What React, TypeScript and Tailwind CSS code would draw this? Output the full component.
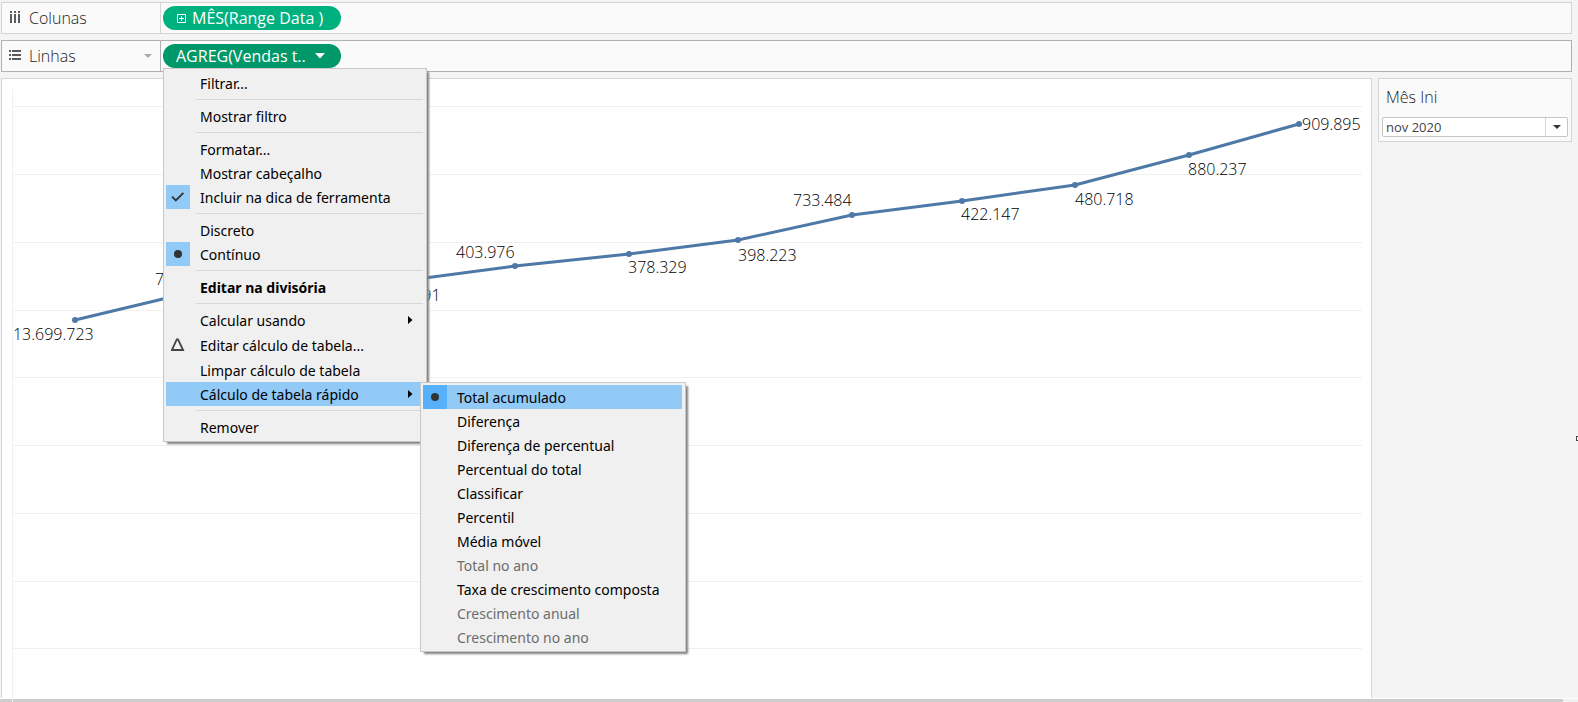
import type { ReactNode } from 'react';

type MenuEntry = {
  label: string;
  mark?: 'check' | 'dot' | 'delta';
  submenu?: boolean;
  active?: boolean;
  bold?: boolean;
  disabled?: boolean;
  tall?: boolean;
};

const menuGroups: MenuEntry[][] = [
  [{ label: 'Filtrar...' }],
  [{ label: 'Mostrar filtro' }],
  [
    { label: 'Formatar...' },
    { label: 'Mostrar cabeçalho' },
    { label: 'Incluir na dica de ferramenta', mark: 'check' },
  ],
  [{ label: 'Discreto' }, { label: 'Contínuo', mark: 'dot' }],
  [{ label: 'Editar na divisória', bold: true }],
  [
    { label: 'Calcular usando', submenu: true },
    { label: 'Editar cálculo de tabela...', mark: 'delta', tall: true },
    { label: 'Limpar cálculo de tabela' },
    { label: 'Cálculo de tabela rápido', submenu: true, active: true },
  ],
  [{ label: 'Remover' }],
];

const quickCalcs: MenuEntry[][] = [
  [
    { label: 'Total acumulado', mark: 'dot', active: true },
    { label: 'Diferença' },
    { label: 'Diferença de percentual' },
    { label: 'Percentual do total' },
    { label: 'Classificar' },
    { label: 'Percentil' },
    { label: 'Média móvel' },
    { label: 'Total no ano', disabled: true },
    { label: 'Taxa de crescimento composta' },
    { label: 'Crescimento anual', disabled: true },
    { label: 'Crescimento no ano', disabled: true },
  ],
];

// x runs along a 1350 unit wide plot, y is in pixels from the top of the pane
const PLOT_WIDTH = 1350;

const points = [
  { x: 63, y: 241, label: '13.699.723', lx: 1, ly: 261 },
  { x: 176, y: 214, label: '739.152', lx: 143, ly: 206 },
  { x: 279, y: 207, label: '412.608', lx: 279, ly: 227 },
  { x: 390, y: 202, label: '384.591', lx: 370, ly: 222 },
  { x: 503, y: 187, label: '403.976', lx: 444, ly: 179 },
  { x: 617, y: 175, label: '378.329', lx: 616, ly: 194 },
  { x: 726, y: 161, label: '398.223', lx: 726, ly: 182 },
  { x: 840, y: 136, label: '733.484', lx: 781, ly: 127 },
  { x: 950, y: 122, label: '422.147', lx: 949, ly: 141 },
  { x: 1063, y: 106, label: '480.718', lx: 1063, ly: 126 },
  { x: 1177, y: 76, label: '880.237', lx: 1176, ly: 96 },
  { x: 1287, y: 45, label: '909.895', lx: 1290, ly: 51 },
];

const gridLines = [27, 95, 163, 231, 298, 366, 434, 502, 569];

const pct = (x: number) => `${(x / PLOT_WIDTH) * 100}%`;

function Mark({ type, active }: { type?: MenuEntry['mark']; active?: boolean }) {
  const boxed = type === 'check' || type === 'dot';
  return (
    <span
      className={`flex h-6 w-6 shrink-0 items-center justify-center ${
        boxed ? (active ? 'bg-[#56b0fa]' : 'bg-[#91c9f7]') : ''
      }`}
    >
      {type === 'check' && (
        <svg width="14" height="12" viewBox="0 0 14 12" fill="none" stroke="#333" strokeWidth="1.8">
          <path d="M1 5.6 4.8 9.4 12.4 1.8" />
        </svg>
      )}
      {type === 'dot' && <span className="h-2 w-2 rounded-full bg-[#333333]" />}
      {type === 'delta' && (
        <svg width="14" height="14" viewBox="0 0 14 14" fill="none" stroke="#444" strokeWidth="1.8">
          <path d="M5.8 1.4.9 12h11.2L7 1.4z" />
        </svg>
      )}
    </span>
  );
}

function Menu({ groups, label }: { groups: MenuEntry[][]; label: string }) {
  return (
    <div
      role="menu"
      aria-label={label}
      className="border border-[#c8c8c8] bg-[#f0f0f0] py-0.5 pr-[3px] pl-0.5 font-['Noto_Sans',sans-serif] text-sm font-normal text-black shadow-[3px_3px_2px_-1px_#808080]"
    >
      {groups.map((group, i) => (
        <div key={i}>
          {i > 0 && <div role="separator" className="my-1 ml-[30px] h-px bg-[#d7d7d7]" />}
          {group.map((item) => (
            <button
              key={item.label}
              type="button"
              role="menuitem"
              disabled={item.disabled}
              className={`flex w-full items-center pr-2.5 text-left whitespace-nowrap ${
                item.tall ? 'h-[26px]' : 'h-6'
              } ${item.active ? 'bg-[#91c9f7]' : ''} ${item.bold ? 'font-bold' : ''} ${
                item.disabled ? 'text-[#6d6d6d]' : ''
              }`}
            >
              <Mark type={item.mark} active={item.active} />
              <span className="ml-2.5 grow pt-0.5">{item.label}</span>
              {item.submenu && (
                <svg width="5" height="8" viewBox="0 0 5 8">
                  <path d="M0 0v8l4.5-4z" fill="#000" />
                </svg>
              )}
            </button>
          ))}
        </div>
      ))}
    </div>
  );
}

function Shelf({
  icon,
  title,
  focused,
  children,
}: {
  icon: ReactNode;
  title: string;
  focused?: boolean;
  children: ReactNode;
}) {
  const line = focused ? 'border-[#b1b1b1]' : 'border-[#d4d4d4]';
  return (
    <section className={`flex h-8 border bg-[#fafafa] ${line}`}>
      <div className={`flex w-[159px] shrink-0 items-center border-r pr-2 pl-[7px] ${line}`}>
        {icon}
        <h2 className="ml-2 grow text-base text-[#222222]">{title}</h2>
        {focused && (
          <svg width="8" height="4" viewBox="0 0 8 4">
            <path d="M0 0h8L4 4z" fill="#ababab" />
          </svg>
        )}
      </div>
      <div className="relative flex items-center pl-0.5">{children}</div>
    </section>
  );
}

function ColumnsIcon() {
  return (
    <svg width="12" height="14" viewBox="0 0 12 14" fill="#5a5a5a">
      {[1, 5, 9].map((x) => (
        <g key={x}>
          <rect x={x} y="0" width="2" height="2" />
          <rect x={x} y="3" width="2" height="9" />
        </g>
      ))}
    </svg>
  );
}

function RowsIcon() {
  return (
    <svg width="12" height="14" viewBox="0 0 12 14" fill="#5a5a5a">
      {[1, 5, 9].map((y) => (
        <g key={y}>
          <rect x="0" y={y} width="2" height="2" />
          <rect x="3" y={y} width="9" height="2" />
        </g>
      ))}
    </svg>
  );
}

function LineChart() {
  return (
    <svg className="absolute inset-y-0 left-2.5 h-full w-[calc(100%-19px)] overflow-visible">
      <rect x="0" y="10" width="1" height="100%" fill="#f0f0f0" />
      {gridLines.map((y) => (
        <rect key={y} x="0" y={y} width="100%" height="1" fill="#f0f0f0" />
      ))}
      {points.slice(1).map((p, i) => (
        <line
          key={p.x}
          x1={pct(points[i].x)}
          y1={points[i].y}
          x2={pct(p.x)}
          y2={p.y}
          stroke="#4e79a7"
          strokeWidth="3"
        />
      ))}
      {points.map((p) => (
        <g key={p.x}>
          <circle cx={pct(p.x)} cy={p.y} r="3" fill="#4e79a7" />
          <text x={pct(p.lx)} y={p.ly} className="fill-black text-base">
            {p.label}
          </text>
        </g>
      ))}
    </svg>
  );
}

export default function App() {
  return (
    <div className="relative flex h-screen flex-col overflow-hidden bg-[#f4f4f4] font-['Open_Sans',sans-serif] font-light">
      <div className="relative z-10 flex flex-col gap-1.5 pt-0.5 pr-1.5 pb-1.5 pl-px">
        <Shelf icon={<ColumnsIcon />} title="Colunas">
          <button
            type="button"
            className="flex h-6 w-[178px] items-center rounded-full bg-[#00b180] pl-3.5 text-base font-medium whitespace-pre text-white"
          >
            <svg width="9" height="10" viewBox="0 -1 9 10" className="mr-1.5 shrink-0" stroke="#fff" fill="none">
              <path d="M.5.5h8v8h-8zM4.5 2v5M2 4.5h5" />
            </svg>
            MÊS(Range Data )
          </button>
        </Shelf>
        <Shelf icon={<RowsIcon />} title="Linhas" focused>
          <button
            type="button"
            className="flex h-6 w-[178px] items-center justify-between rounded-full bg-[#009869] pr-4 pl-[13px] text-base font-medium whitespace-nowrap text-white"
          >
            AGREG(Vendas t..
            <svg width="10" height="6" viewBox="0 0 10 6" className="shrink-0">
              <path d="M0 0h10L5 5.5z" fill="#fff" />
            </svg>
          </button>
          <div className="absolute top-[27px] left-0.5 w-[264px]">
            <Menu label="Opções do campo" groups={menuGroups} />
            <div className="absolute top-[314px] left-[257px] w-[266px]">
              <Menu label="Cálculo de tabela rápido" groups={quickCalcs} />
            </div>
          </div>
        </Shelf>
      </div>

      <main className="flex min-h-0 grow items-start gap-1.5 pr-1.5 pl-px">
        <section className="relative h-full grow border border-b-0 border-[#d4d4d4] bg-white">
          <LineChart />
        </section>
        <aside className="w-[194px] shrink-0 border border-[#d4d4d4] bg-[#fafafa] px-[3px] pt-1.5 pb-1">
          <label htmlFor="start-month" className="block pl-1 text-base text-[#222222]">
            Mês Ini
          </label>
          <div className="relative mt-2">
            <select
              id="start-month"
              className="block h-5 w-full appearance-none rounded-xs border border-[#c4c4c4] bg-white pl-[3px] text-[13px] leading-4 font-normal text-[#444444]"
            >
              <option>nov 2020</option>
            </select>
            <span className="pointer-events-none absolute inset-y-px right-px flex w-[22px] items-center justify-center border-l border-[#d4d4d4]">
              <svg width="8" height="4" viewBox="0 0 8 4">
                <path d="M0 0h8L4 4z" fill="#333" />
              </svg>
            </span>
          </div>
        </aside>
      </main>

      <div className="flex h-1 shrink-0 border-t border-white bg-[#f0f0f0] pr-[15px]">
        <div className="grow bg-[#cdcdcd]" />
      </div>
      <div className="absolute top-[436px] -right-[3px] h-[5px] w-[5px] border border-[#444444] bg-white" />
    </div>
  );
}
